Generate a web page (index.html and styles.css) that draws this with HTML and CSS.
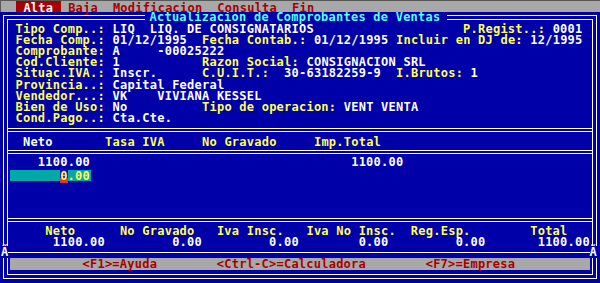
FILE: index.html
```html
<!DOCTYPE html>
<html lang="es">
  <head>
    <meta charset="UTF-8" />
    <meta name="viewport" content="width=device-width, initial-scale=1.0" />
    <title>Actualizacion de Comprobantes de Ventas</title>
    <link rel="stylesheet" href="styles.css">
  </head>
  <body>
    <div class="screen">
      <!-- Menu bar -->
      <div class="menubar">  <span class="on"> Alta </span> Baja  Modificacion  Consulta  Fin</div>

      <div class="desk">
        <div class="outer">
          <div class="inner">
            <div class="title">Actualizacion de Comprobantes de Ventas</div>

            <!-- Header fields -->
            <div class="fields">
              <div class="ln"> <span class="k">Tipo Comp..:</span> LIQ  LIQ. DE CONSIGNATARIOS                    <span class="k">P.Regist..:</span> 0001</div>
              <div class="ln"> <span class="k">Fecha Comp.:</span> 01/12/1995  <span class="k">Fecha Contab.:</span> 01/12/1995 <span class="k">Incluir en DJ de:</span> 12/1995</div>
              <div class="ln"> <span class="k">Comprobante:</span> A     -00025222</div>
              <div class="ln"> <span class="k">Cod.Cliente:</span> 1           <span class="k">Razon Social:</span> CONSIGNACION SRL</div>
              <div class="ln"> <span class="k">Situac.IVA.:</span> Inscr.      <span class="k">C.U.I.T.:</span>  30-63182259-9  <span class="k">I.Brutos:</span> 1</div>
              <div class="ln"> <span class="k">Provincia..:</span> Capital Federal</div>
              <div class="ln"> <span class="k">Vendedor...:</span> VK    VIVIANA KESSEL</div>
              <div class="ln"> <span class="k">Bien de Uso:</span> No          <span class="k">Tipo de operacion:</span> VENT VENTA</div>
              <div class="ln"> <span class="k">Cond.Pago..:</span> Cta.Cte.</div>
            </div>
            <div class="sep"></div>

            <!-- Grid header -->
            <div class="head">
              <div class="ln">  Neto       <span class="k">Tasa IVA</span>     <span class="k">No Gravado</span>     <span class="k">Imp.Total</span></div>
            </div>
            <div class="sep"></div>

            <!-- Grid rows -->
            <div class="body">
              <div class="ln">    1100.00                                   1100.00</div>
              <div class="ln hl-row"><span class="hl"><span class="cur">0</span>.00</span></div>
            </div>
            <div class="sep"></div>

            <!-- Totals -->
            <div class="totals">
              <div class="ln k">     Neto      No Gravado   Iva Insc.   Iva No Insc.  Reg.Esp.        Total</div>
              <div class="ln">      1100.00         0.00         0.00        0.00         0.00       1100.00</div>
            </div>
            <div class="rule">
              <span class="tee tee-left">Ã</span>
              <span class="tee tee-right">Ã</span>
            </div>

            <!-- Key help -->
            <div class="status">&lt;F1&gt;=Ayuda        &lt;Ctrl-C&gt;=Calculadora        &lt;F7&gt;=Empresa</div>
          </div>
        </div>
      </div>
    </div>
  </body>
</html>
```

FILE: styles.css
```css
body {
  margin: 0;
  padding: 0;
  background-color: #0000a8;
  overflow: hidden;
}

.screen {
  width: 600px;
  height: 283px;
  display: flex;
  flex-direction: column;
  font-family: "DejaVu Sans Mono", monospace;
  font-size: 12px;
  font-weight: bold;
  letter-spacing: 0.236px;
  color: #ffffff;
}

/* Top menu */
.menubar {
  position: relative;
  z-index: 1;
  height: 12px;
  box-sizing: border-box;
  padding-top: 1px;
  border-top: 1px solid #585858;
  border-left: 1px solid #585858;
  background-color: #a8a8a8;
  color: #a80000;
  line-height: 12px;
  white-space: pre;
  flex: none;
}

.menubar .on {
  display: inline-block;
  vertical-align: top;
  height: 10px;
  margin-top: -1px;
  padding-top: 1px;
  line-height: 12px;
  background-color: #a80000;
  color: #ffffff;
}

/* Double window frame */
.desk {
  flex: 1;
  padding: 3px 3px 4px;
  background-color: #0000a8;
}

.outer {
  height: 100%;
  box-sizing: border-box;
  border: 1px solid #ffffff;
  padding: 3px;
}

.inner {
  position: relative;
  height: 100%;
  box-sizing: border-box;
  border: 1px solid #ffffff;
  display: flex;
  flex-direction: column;
}

.title {
  position: absolute;
  top: -7px;
  left: 137px;
  height: 9px;
  line-height: 9.5px;
  padding: 0 7px 0 4.5px;
  background-color: #0000a8;
  color: #55ffff;
  white-space: pre;
}

.ln {
  height: 11.2px;
  line-height: 13.6px;
  white-space: pre;
}

.k {
  color: #ffff55;
}

.fields {
  height: 108px;
  box-sizing: border-box;
  padding-top: 2.8px;
  flex: none;
}

.fields .ln {
  height: 11.16px;
}

.sep {
  height: 2px;
  border-top: 1px solid #ffffff;
  border-bottom: 1px solid #ffffff;
  flex: none;
}

.head {
  height: 18px;
  box-sizing: border-box;
  padding-top: 4.1px;
  flex: none;
}

.body {
  height: 64px;
  box-sizing: border-box;
  padding-top: 2px;
  flex: none;
}

.hl-row {
  margin-top: 2.8px;
}

.hl {
  display: inline-block;
  vertical-align: top;
  width: 81px;
  height: 11px;
  margin-left: 2px;
  padding-right: 1px;
  box-sizing: border-box;
  line-height: 12.2px;
  text-align: right;
  background-color: #00a8a8;
  color: #ffff55;
}

.cur {
  background: linear-gradient(to bottom, #1414a0 0 62%, #d83838 62% 100%);
}

.totals {
  height: 30px;
  box-sizing: border-box;
  padding-top: 2.5px;
  flex: none;
}

.rule {
  position: relative;
  height: 1px;
  background-color: #ffffff;
  flex: none;
}

.tee {
  position: absolute;
  top: -6px;
  height: 12px;
  line-height: 13.7px;
  background-color: #0000a8;
  color: #ffffff;
  white-space: pre;
}

.tee-left {
  left: -7px;
}

.tee-right {
  left: 581.6px;
}

/* Bottom key help */
.status {
  height: 12px;
  margin: 5px 2px 0;
  padding-left: 72.5px;
  line-height: 13px;
  background-color: #a8a8a8;
  color: #a80000;
  white-space: pre;
  flex: none;
}
```
